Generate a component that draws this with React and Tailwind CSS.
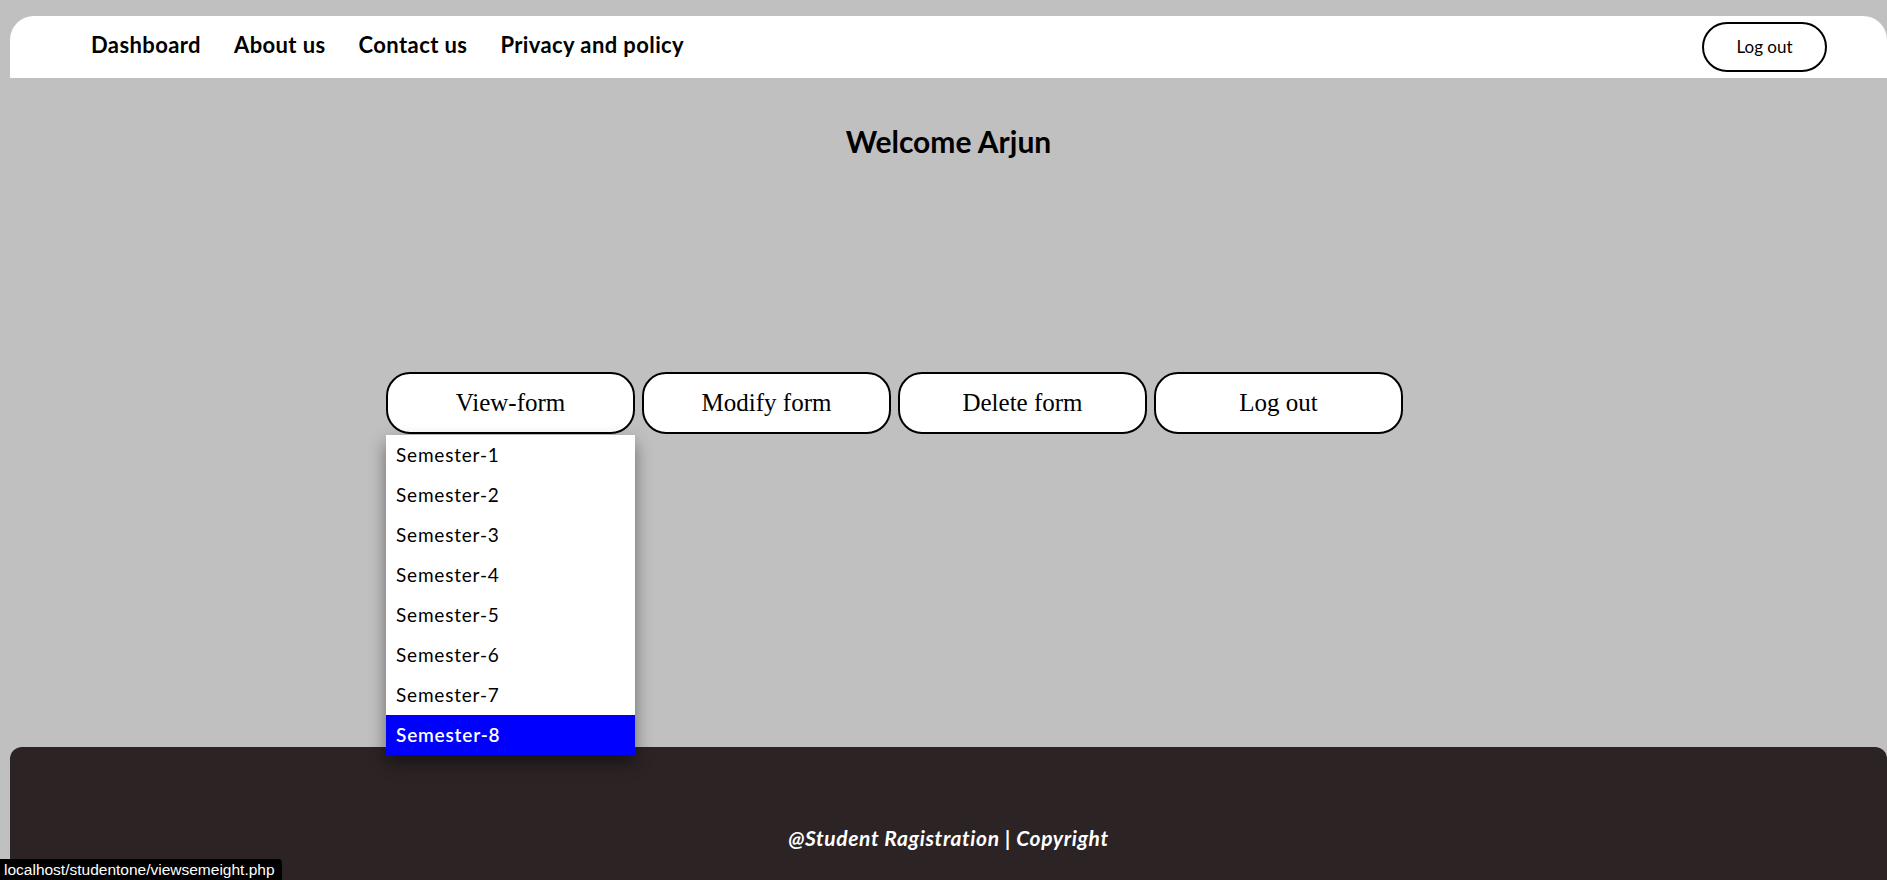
import React from "react";

const sems = ["Semester-1","Semester-2","Semester-3","Semester-4","Semester-5","Semester-6","Semester-7","Semester-8"];

export default function App() {
  const sans = { fontFamily: "Lato, 'Noto Sans', sans-serif" };
  return (
    <div className="min-h-screen bg-[#c0c0c0] overflow-hidden" style={sans}>
      <nav className="ml-[10px] mt-[16px] h-[62px] bg-white rounded-t-[24px] flex items-center justify-between pl-[81px] pr-[60px]">
        <ul className="flex items-center gap-[33px] text-[22px] tracking-[0.4px] font-bold text-black pb-[5px]">
          <li>Dashboard</li>
          <li>About us</li>
          <li>Contact us</li>
          <li>Privacy and policy</li>
        </ul>
        <button className="w-[125px] h-[50px] border-2 border-black rounded-full bg-white text-[17px] text-black">Log out</button>
      </nav>

      <main className="ml-[10px] h-[669px] flex flex-col">
        <h1 className="mt-[45px] text-center text-[30px] leading-[36px] font-bold text-black">Welcome Arjun</h1>
        <div className="mt-[213px] ml-[376px] flex gap-[7px]" style={{ fontFamily: "'Liberation Serif', serif" }}>
          <div className="relative">
            <button className="w-[249px] h-[62px] bg-white border-2 border-black rounded-[24px] text-[25px] text-black">View-form</button>
            <ul className="absolute left-0 top-[63px] w-[249px] bg-white shadow-[0_8px_16px_0_rgba(0,0,0,0.45)] z-10" style={sans}>
              {sems.map((s, i) => (
                <li key={s} className={`h-[40px] flex items-center pl-[10px] text-[19px] tracking-[0.8px] ${i === 7 ? "bg-[#0000ff] text-white font-semibold" : "text-black"}`}>{s}</li>
              ))}
            </ul>
          </div>
          <button className="w-[249px] h-[62px] bg-white border-2 border-black rounded-[24px] text-[25px] text-black">Modify form</button>
          <button className="w-[249px] h-[62px] bg-white border-2 border-black rounded-[24px] text-[25px] text-black">Delete form</button>
          <button className="w-[249px] h-[62px] bg-white border-2 border-black rounded-[24px] text-[25px] text-black">Log out</button>
        </div>
      </main>

      <footer className="ml-[10px] h-[150px] bg-[#2c2325] rounded-t-[12px] flex justify-center pt-[77px]">
        <p className="text-white italic font-bold text-[21px] tracking-[0.6px] leading-[28px]">@Student Ragistration | Copyright</p>
      </footer>

      <div className="fixed left-0 bottom-0 h-[21px] w-[282px] bg-black text-white text-[15.5px] leading-[21px] pl-[4px] rounded-tr-[4px]" style={{ fontFamily: "'Liberation Sans', sans-serif" }}>
        localhost/studentone/viewsemeight.php
      </div>
    </div>
  );
}
